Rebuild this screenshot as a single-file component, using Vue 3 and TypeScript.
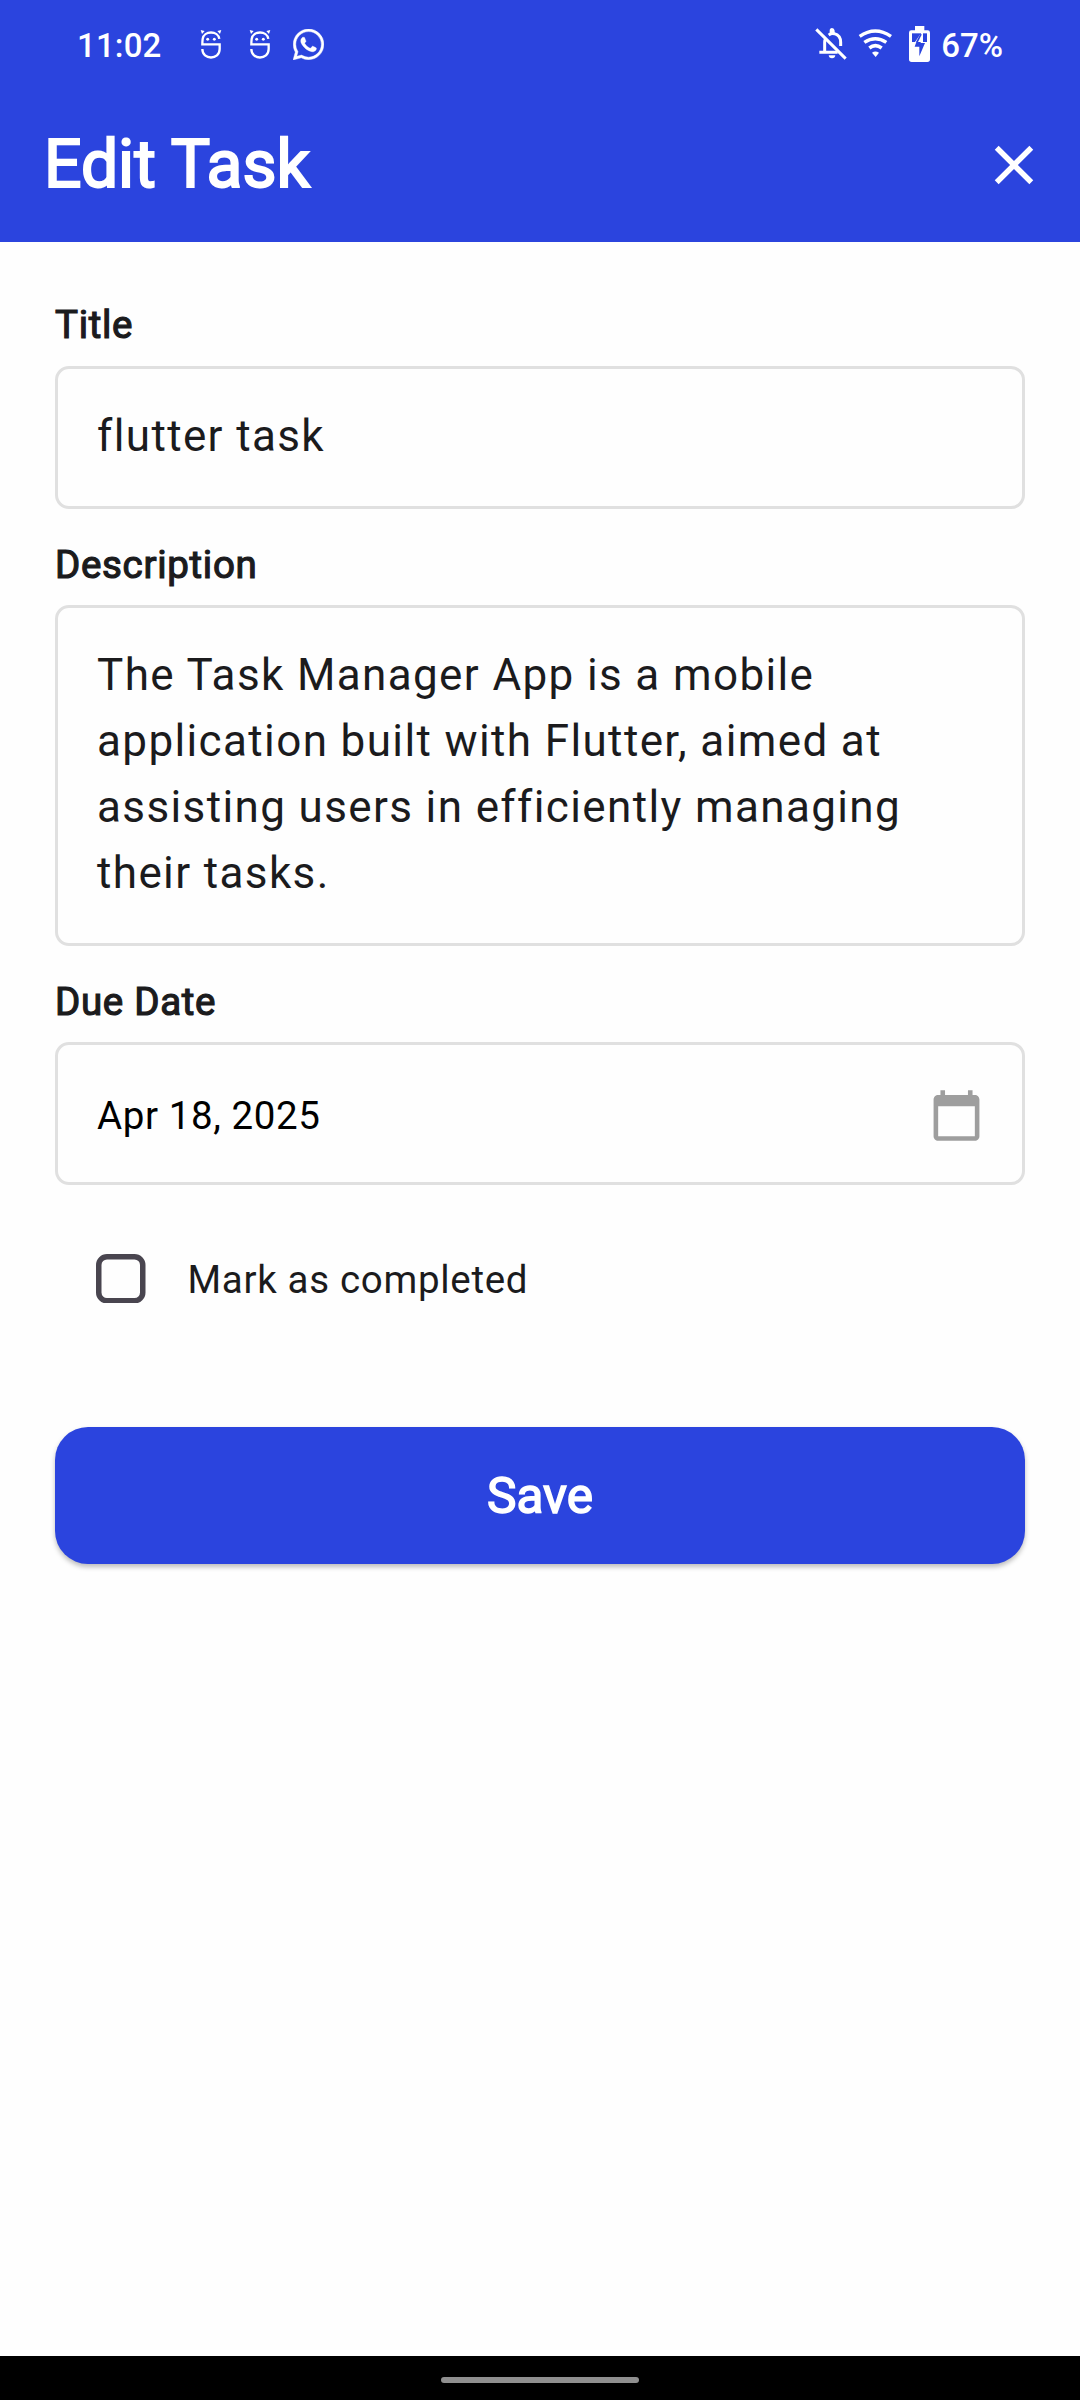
<script setup lang="ts">
import { ref } from 'vue'

const title = ref('flutter task')
const description = ref(
  'The Task Manager App is a mobile application built with Flutter, aimed at assisting users in efficiently managing their tasks.',
)
const dueDate = ref('Apr 18, 2025')
const completed = ref(false)
</script>

<template>
  <div class="screen">
    <header class="top">
      <div class="status">
        <span class="clock">11:02</span>
        <svg v-for="n in 2" :key="n" class="app-icon" viewBox="453 56 66 91" fill="none" stroke="#fff" stroke-width="7">
          <path d="M511 86C508 60 464 60 461 86Q460 94 460 102H512V116C512 150 460 150 460 116" />
          <path d="M455 59l12 3-8 9zM517 59l-12 3 8 9z" fill="#fff" stroke="none" />
          <circle cx="476" cy="87" r="4.5" fill="#fff" stroke="none" />
          <circle cx="496" cy="87" r="4.5" fill="#fff" stroke="none" />
        </svg>
        <svg class="whatsapp" viewBox="0 0 24 24" fill="#fff" stroke="#fff" stroke-width="0.3">
          <path d="M17.472 14.382c-.297-.149-1.758-.867-2.03-.967-.273-.099-.471-.148-.67.15-.197.297-.767.966-.94 1.164-.173.199-.347.223-.644.075-.297-.15-1.255-.463-2.39-1.475-.883-.788-1.48-1.761-1.653-2.059-.173-.297-.018-.458.13-.606.134-.133.298-.347.446-.52.149-.174.198-.298.298-.497.099-.198.05-.371-.025-.52-.075-.149-.669-1.612-.916-2.207-.242-.579-.487-.5-.669-.51-.173-.008-.371-.01-.57-.01-.198 0-.52.074-.792.372-.272.297-1.04 1.016-1.04 2.479 0 1.462 1.065 2.875 1.213 3.074.149.198 2.096 3.2 5.077 4.487.709.306 1.262.489 1.694.625.712.227 1.36.195 1.871.118.571-.085 1.758-.719 2.006-1.413.248-.694.248-1.289.173-1.413-.074-.124-.272-.198-.57-.347m-5.421 7.403h-.004a9.87 9.87 0 01-5.031-1.378l-.361-.214-3.741.982.998-3.648-.235-.374a9.86 9.86 0 01-1.51-5.26c.001-5.45 4.436-9.884 9.888-9.884 2.64 0 5.122 1.03 6.988 2.898a9.825 9.825 0 012.893 6.994c-.003 5.45-4.437 9.884-9.885 9.884m8.413-18.297A11.815 11.815 0 0012.05 0C5.495 0 .16 5.335.157 11.892c0 2.096.547 4.142 1.588 5.945L.057 24l6.305-1.654a11.882 11.882 0 005.683 1.448h.005c6.554 0 11.89-5.335 11.893-11.893a11.821 11.821 0 00-3.48-8.413z" />
        </svg>
        <span class="grow"></span>
        <svg class="bell" viewBox="75 51 96 99" fill="none" stroke="#fff" stroke-width="9">
          <path d="M88 127H143M104 128V97Q104 90 107 86M116 75Q124 69 133 71Q152 76 152 97V108" />
          <path d="M119 69V62Q119 54 126 54T134 62V69Z" fill="#fff" stroke="none" />
          <path d="M116 136h20q-1 9-10 9t-10-9z" fill="#fff" stroke="none" />
          <path d="M79 58L167 146" />
        </svg>
        <svg class="wifi" viewBox="204 54 105 90" fill="none" stroke="#fff" stroke-width="10.5">
          <path d="M209 79Q256 47 303 79M223 97Q256 75 289 97M238 114Q256 100 275 114" />
          <path d="M246 128Q256 121 267 128L257 141Z" fill="#fff" stroke="none" />
        </svg>
        <svg class="battery" viewBox="357 48 63 108">
          <path d="M375 48h28v13h10q7 0 7 7v80q0 8-8 8h-47q-8 0-8-8V68q0-7 7-7h11z" fill="#fff" />
          <path d="M366 70h45v26h-45z" fill="#2b44de" />
          <path d="M398 62L375 96v2h17v-2h7V62z" fill="#fff" />
          <path d="M392 70L378 96h6l11-22z" fill="#2b44de" />
          <path d="M379 96L374 110h14v29l17-40h-13v-3z" fill="#2b44de" />
        </svg>
        <span class="percent">67%</span>
      </div>
      <div class="app-bar">
        <h1>Edit Task</h1>
        <svg class="close" viewBox="0 0 24 24" fill="#fff">
          <path d="M19 6.41L17.59 5 12 10.59 6.41 5 5 6.41 10.59 12 5 17.59 6.41 19 12 13.41 17.59 19 19 17.59 13.41 12z" />
        </svg>
      </div>
    </header>

    <main class="form">
      <label class="label first">Title</label>
      <div class="field single">{{ title }}</div>

      <label class="label">Description</label>
      <div class="field multi">{{ description }}</div>

      <label class="label">Due Date</label>
      <div class="field date">
        <span>{{ dueDate }}</span>
        <svg class="calendar" viewBox="0 0 24 24" fill="#9e9e9e">
          <path d="M20 3h-1V1h-2v2H7V1H5v2H4c-1.1 0-2 .9-2 2v16c0 1.1.9 2 2 2h16c1.1 0 2-.9 2-2V5c0-1.1-.9-2-2-2zm0 18H4V8h16v13z" />
        </svg>
      </div>

      <div class="check-row" @click="completed = !completed">
        <svg class="checkbox" viewBox="0 0 18 18">
          <rect x="1" y="1" width="16" height="16" rx="3" fill="none" stroke="#49454f" stroke-width="2" />
          <path v-if="completed" d="M4 9l3.5 3.5L14 6" fill="none" stroke="#49454f" stroke-width="2" />
        </svg>
        <span>Mark as completed</span>
      </div>

      <button class="save" type="button">Save</button>
    </main>

    <footer class="nav"><span class="pill"></span></footer>
  </div>
</template>

<style>
body {
  margin: 0;
}
</style>

<style scoped>
.screen {
  display: flex;
  flex-direction: column;
  width: 1080px;
  height: 2400px;
  background: #fefefe;
  color: #1b1b1d;
  font-family: Roboto, sans-serif;
  font-size: 38.5px;
}
svg {
  display: block;
  flex: none;
}
.top {
  height: 242px;
  background: #2b44de;
  color: #fff;
}
.status {
  display: flex;
  align-items: center;
  height: 90px;
  padding: 0 77px 0 77px;
  font-size: 33px;
  font-weight: 500;
  line-height: 91px;
}
.clock {
  width: 123px;
  letter-spacing: 0.15px;
}
.app-icon {
  width: 22px;
  height: 30.3px;
  margin-right: 26.7px;
  margin-top: -2px;
}
.whatsapp {
  width: 31px;
  height: 31px;
  margin-left: -4.4px;
  margin-top: -1px;
}
.grow {
  flex: 1;
}
.bell {
  width: 32px;
  height: 33px;
  margin-top: -3px;
}
.wifi {
  width: 35px;
  height: 30px;
  margin-left: 11px;
  margin-top: -4px;
}
.battery {
  width: 21px;
  height: 36px;
  margin-left: 16px;
  margin-top: -2px;
}
.percent {
  margin-left: 11.5px;
}
.app-bar {
  display: flex;
  align-items: center;
  justify-content: space-between;
  height: 150px;
  padding: 0 33px 0 44px;
}
h1 {
  margin: 0;
  font-size: 66px;
  font-weight: 400;
  line-height: 150px;
  -webkit-text-stroke: 2.1px currentColor;
}
.close {
  width: 66px;
  height: 66px;
}
.form {
  display: flex;
  flex: 1;
  flex-direction: column;
  padding: 60px 55px 0;
  letter-spacing: 0.6875px;
}
.label {
  height: 46px;
  margin-bottom: 17px;
  line-height: 46px;
  -webkit-text-stroke: 1.2px currentColor;
}
.first {
  margin-bottom: 18px;
}
.field {
  box-sizing: border-box;
  margin-bottom: 33px;
  padding: 34px 39px 0;
  border: 3px solid #e0e0e0;
  border-radius: 14px;
}
.single {
  height: 143px;
}
.multi {
  height: 341px;
}
.single,
.multi {
  font-size: 44px;
  line-height: 66px;
  letter-spacing: 1.375px;
}
.date {
  display: flex;
  align-items: center;
  justify-content: space-between;
  height: 143px;
  margin-bottom: 0;
  padding-top: 4px;
  padding-right: 38px;
  color: #000;
  letter-spacing: 0.6px;
}
.calendar {
  width: 55px;
  height: 55px;
}
.check-row {
  display: flex;
  align-items: center;
  height: 132px;
  margin-top: 28px;
  padding-left: 41px;
}
.checkbox {
  width: 49.5px;
  height: 49.5px;
  margin-top: -1px;
  margin-right: 42px;
}
.save {
  height: 137px;
  margin-top: 82px;
  padding: 0;
  border: 0;
  border-radius: 33px;
  background: #2b44de;
  box-shadow: 0 3px 5px rgba(0, 0, 0, 0.26);
  color: #fff;
  font: 400 49.5px/139px Roboto, sans-serif;
  -webkit-text-stroke: 1.55px currentColor;
}
.nav {
  display: flex;
  align-items: center;
  justify-content: center;
  height: 44px;
  padding-top: 4px;
  box-sizing: border-box;
  background: #000;
}
.pill {
  width: 198px;
  height: 6px;
  border-radius: 3px;
  background: #8f8f8f;
}
</style>
